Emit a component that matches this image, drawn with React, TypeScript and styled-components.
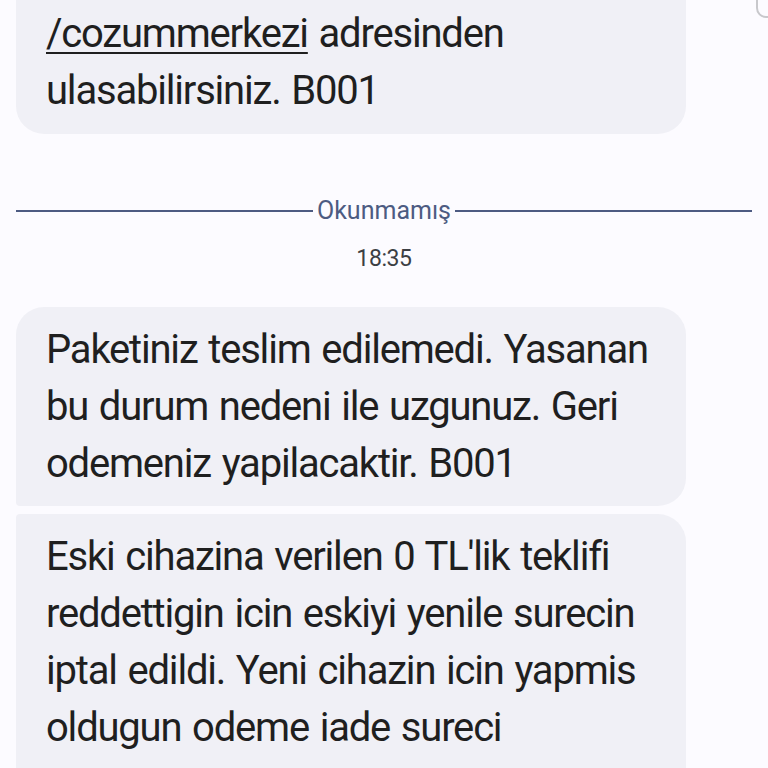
import styled, { createGlobalStyle } from "styled-components";

const GlobalStyle = createGlobalStyle`
  html, body {
    margin: 0;
    padding: 0;
    background: #fcfbff;
  }
  body {
    font-family: Roboto, "Noto Sans", sans-serif;
    -webkit-font-smoothing: antialiased;
  }
`;

type Corner = "full" | "top" | "bottom";

const messagesAfter = [
  {
    id: "m2",
    corner: "top" as Corner,
    lines: [
      "Paketiniz teslim edilemedi. Yasanan",
      "bu durum nedeni ile uzgunuz. Geri",
      "odemeniz yapilacaktir. B001",
    ],
  },
  {
    id: "m3",
    corner: "bottom" as Corner,
    lines: [
      "Eski cihazina verilen 0 TL'lik teklifi",
      "reddettigin icin eskiyi yenile surecin",
      "iptal edildi. Yeni cihazin icin yapmis",
      "oldugun odeme iade sureci",
    ],
  },
];

function App() {
  return (
    <>
      <GlobalStyle />
      <Screen>
        <Thread>
          <Bubble $corner="full" $cut>
            <Text>
              <Link>/cozummerkezi</Link> adresinden
              <br />
              ulasabilirsiniz. B001
            </Text>
          </Bubble>

          <Divider>
            <Rule />
            <DividerLabel>Okunmamış</DividerLabel>
            <Rule />
          </Divider>
          <Time>18:35</Time>

          <Group>
            {messagesAfter.map((m) => (
              <Bubble key={m.id} $corner={m.corner}>
                <Text>
                  {m.lines.map((l, i) => (
                    <span key={i}>
                      {l}
                      {i < m.lines.length - 1 && <br />}
                    </span>
                  ))}
                </Text>
              </Bubble>
            ))}
          </Group>
        </Thread>
        <EdgeHint />
      </Screen>
    </>
  );
}

const Screen = styled.div`
  position: relative;
  width: 768px;
  height: 768px;
  overflow: hidden;
  background: #fcfbff;
`;

const Thread = styled.div`
  display: flex;
  flex-direction: column;
  padding: 0 16px;
`;

const radius = (c: Corner) => {
  if (c === "top") return "28px 28px 28px 4px";
  if (c === "bottom") return "4px 28px 28px 28px";
  return "28px";
};

const Bubble = styled.div<{ $corner: Corner; $cut?: boolean }>`
  width: 670px;
  box-sizing: border-box;
  background: #f0f0f6;
  border-radius: ${(p) => (p.$cut ? "0 0 28px 28px" : radius(p.$corner))};
  padding: ${(p) => (p.$cut ? "5px 30px 15px" : "14px 30px 14px")};
  min-height: ${(p) => (p.$corner === "bottom" ? "300px" : "auto")};
`;

const Text = styled.p`
  margin: 0;
  font-size: 40px;
  line-height: 57px;
  color: #1f1f1f;
  letter-spacing: -1.2px;
  word-spacing: 2px;
  white-space: nowrap;
`;

const Link = styled.span`
  text-decoration: underline;
  text-decoration-thickness: 2px;
  text-underline-offset: 5px;
`;

const Divider = styled.div`
  display: flex;
  align-items: center;
  gap: 4px;
  margin-top: 62px;
  height: 30px;
  width: 736px;
`;

const Rule = styled.div`
  flex: 1;
  height: 2px;
  background: #4d5b82;
`;

const DividerLabel = styled.span`
  font-size: 25px;
  color: #4d5b82;
  line-height: 30px;
`;

const Time = styled.div`
  margin-top: 18px;
  text-align: center;
  width: 736px;
  font-size: 23px;
  letter-spacing: -0.4px;
  line-height: 30px;
  color: #3c3f44;
`;

const Group = styled.div`
  display: flex;
  flex-direction: column;
  gap: 8px;
  margin-top: 33px;
`;

const EdgeHint = styled.div`
  position: absolute;
  top: -18px;
  right: -20px;
  width: 28px;
  height: 32px;
  border: 2px solid #c8c8cc;
  border-radius: 10px;
`;

export default App;
